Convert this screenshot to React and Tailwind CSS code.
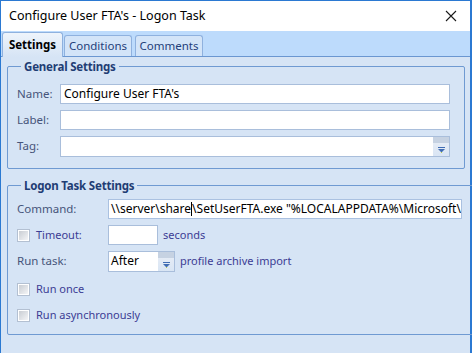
import React from "react";

const font = { fontFamily: '"Noto Sans", "Open Sans", sans-serif' };

function Checkbox() {
  return (
    <span className="inline-flex h-[13px] w-[13px] items-center justify-center border border-[#b3c0d2] bg-white">
      <span className="h-[9px] w-[9px] bg-gradient-to-br from-[#c9cdd3] to-[#f4f5f7]" />
    </span>
  );
}

function DropButton() {
  return (
    <span className="flex h-full w-[16px] flex-col items-center bg-gradient-to-b from-[#e9eef6] to-[#d9e5f4]">
      <span className="h-[6px] w-full bg-[radial-gradient(#c6d2e2_1px,transparent_1px)] bg-[length:2px_2px]" />
      <svg width="9" height="7" viewBox="0 0 9 7" className="mt-[4px]">
        <rect x="1" y="0" width="7" height="1" fill="#3f6cb3" />
        <path d="M1 2 L8 2 L4.5 5.5 Z" fill="#3f6cb3" />
        <rect x="4" y="5" width="1" height="1" fill="#b8c94a" />
      </svg>
    </span>
  );
}

function Field({ label, children }) {
  return (
    <div className="flex h-[20px] items-center">
      <span className="w-[43px] text-[11.5px] text-[#46547a]">{label}</span>
      {children}
    </div>
  );
}

export default function App() {
  const command = '\\\\server\\share';
  const command2 = '\\SetUserFTA.exe "%LOCALAPPDATA%\\Microsoft\\';

  return (
    <div
      style={font}
      className="flex h-[353px] w-[472px] flex-col border-l border-r-2 border-t border-[#2b79d2] bg-[#d6e4f5]"
    >
      {/* title bar */}
      <div className="flex h-[30px] items-center justify-between bg-white pl-[8px] pr-[13px]">
        <span className="text-[12.5px] text-black">Configure User FTA's - Logon Task</span>
        <svg width="12" height="12" viewBox="0 0 12 12">
          <path d="M1 1 L11 11 M11 1 L1 11" stroke="#1a1a1a" strokeWidth="1.1" />
        </svg>
      </div>

      {/* tabs */}
      <div className="flex h-[26px] items-end gap-[1px] border-b border-[#6b97d1] bg-[#bddbfc] pl-[1px]">
        <div className="relative z-10 -mb-px flex h-[25px] w-[61px] items-center justify-center rounded-t-[3px] border border-b-0 border-[#8fb1de] bg-gradient-to-b from-[#eef4fb] to-[#d6e4f5] text-[11.5px] font-bold text-black">
          Settings
        </div>
        <div className="flex h-[21px] w-[68px] items-center justify-center rounded-t-[3px] border border-b-0 border-[#8fb1de] bg-[#d3e4f8] text-[11.5px] text-[#23407a]">
          Conditions
        </div>
        <div className="ml-[2px] flex h-[21px] w-[68px] items-center justify-center rounded-t-[3px] border border-b-0 border-[#8fb1de] bg-[#d3e4f8] text-[11.5px] text-[#23407a]">
          Comments
        </div>
      </div>

      <div className="flex flex-col gap-[8px] pl-[6px] pr-[5px] pt-[1px]">
        {/* general settings */}
        <fieldset className="rounded-[2px] border border-[#6f9ad2] pb-[12px] pl-[9px] pr-[14px]">
          <legend className="ml-[4px] px-[3px] text-[11.5px] font-bold leading-[17px] tracking-[-0.2px] text-[#1f3d74]">
            General Settings
          </legend>
          <div className="mt-[9px] flex flex-col gap-[6px]">
            <Field label="Name:">
              <div className="flex h-[20px] flex-1 items-center border border-[#a9bedb] bg-white pl-[3px] text-[12px] text-black">
                Configure User FTA's
              </div>
            </Field>
            <Field label="Label:">
              <div className="h-[20px] flex-1 border border-[#a9bedb] bg-white" />
            </Field>
            <Field label="Tag:">
              <div className="flex h-[21px] flex-1 justify-end border border-[#a9bedb] bg-white">
                <DropButton />
              </div>
            </Field>
          </div>
        </fieldset>

        {/* logon task settings */}
        <fieldset className="rounded-[2px] border border-[#6f9ad2] pb-[9px] pl-[9px] pr-[16px]">
          <legend className="ml-[4px] px-[3px] text-[11.5px] font-bold leading-[17px] tracking-[-0.2px] text-[#1f3d74]">
            Logon Task Settings
          </legend>
          <div className="mt-[5px] flex flex-col gap-[6px] text-[11px]">
            <div className="flex h-[20px] items-center">
              <span className="w-[91px] text-[11.5px] text-[#46547a]">Command:</span>
              <div className="flex h-[20px] flex-1 items-center overflow-hidden whitespace-nowrap border border-[#aac1e1] bg-white pl-[2px] text-[12px] text-black">
                {command}
                <span className="inline-block h-[14px] border-l border-black" />
                {command2}
              </div>
            </div>
            <div className="flex h-[20px] items-center">
              <span className="flex w-[91px] items-center gap-[6px] text-[#3c3c94]">
                <Checkbox />
                Timeout:
              </span>
              <div className="h-[20px] w-[50px] border border-[#a9bedb] bg-white" />
              <span className="ml-[5px] text-[#3c3c94]">seconds</span>
            </div>
            <div className="flex h-[20px] items-center">
              <span className="w-[91px] text-[11.5px] text-[#46547a]">Run task:</span>
              <div className="flex h-[21px] w-[67px] items-stretch justify-between border border-[#a9bedb] bg-white pl-[2px] text-[12px] text-black">
                <span className="self-center">After</span>
                <DropButton />
              </div>
              <span className="ml-[5px] text-[#3c3c94]">profile archive import</span>
            </div>
            <div className="mt-[2px] flex h-[20px] items-center gap-[6px] text-[#3c3c94]">
              <Checkbox />
              Run once
            </div>
            <div className="flex h-[20px] items-center gap-[6px] text-[#3c3c94]">
              <Checkbox />
              Run asynchronously
            </div>
          </div>
        </fieldset>
      </div>
    </div>
  );
}
